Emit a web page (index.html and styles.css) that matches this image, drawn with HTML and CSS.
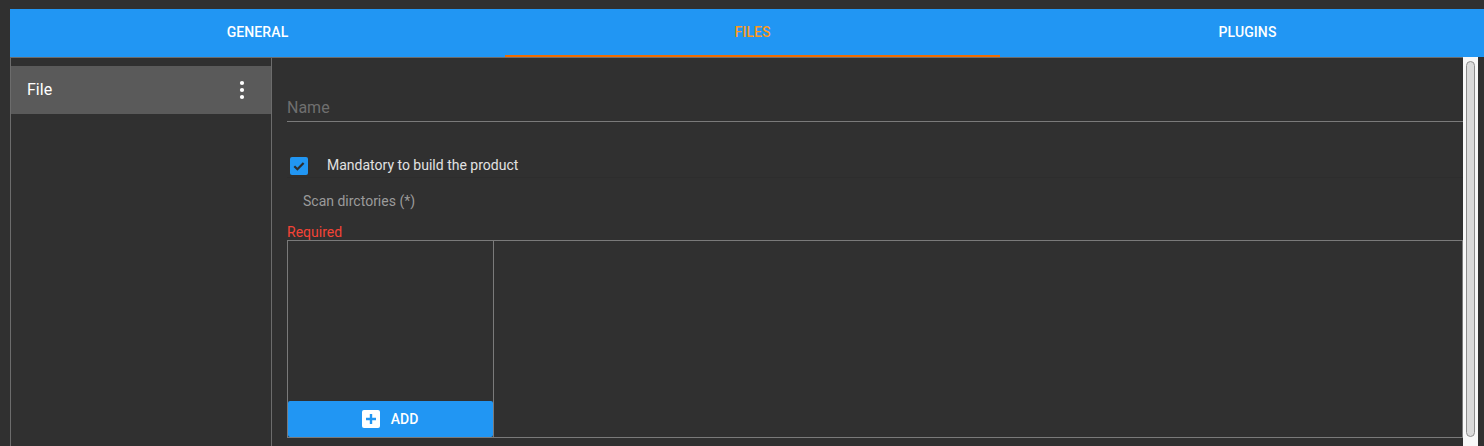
FILE: index.html
```html
<!DOCTYPE html>
<html lang="en">
<head>
<meta charset="utf-8">
<title>Files</title>
<link rel="stylesheet" href="styles.css">
</head>
<body>
<div class="app">
  <nav class="tabs">
    <div class="tab">GENERAL</div>
    <div class="tab active">FILES</div>
    <div class="tab">PLUGINS</div>
  </nav>
  <div class="content">
    <aside class="sidebar">
      <div class="item">
        <span class="item-label">File</span>
        <svg class="kebab" width="6" height="20" viewBox="0 0 6 20"><circle cx="3" cy="3" r="2.1" fill="#fff"/><circle cx="3" cy="10" r="2.1" fill="#fff"/><circle cx="3" cy="17" r="2.1" fill="#fff"/></svg>
      </div>
    </aside>
    <main class="main">
      <div class="field-name">Name</div>
      <div class="check-row">
        <span class="checkbox">
          <svg width="18" height="18" viewBox="0 0 18 18"><path d="M4.3 9.3 L7.4 12.3 L13.6 5.9" fill="none" stroke="#2e2e2e" stroke-width="2.2"/></svg>
        </span>
        <span class="check-label">Mandatory to build the product</span>
      </div>
      <div class="scan-label">Scan dirctories (*)</div>
      <div class="required">Required</div>
      <div class="box">
        <div class="box-left">
          <div class="list"></div>
          <button class="add-btn">
            <svg width="18" height="18" viewBox="0 0 18 18"><rect x="0" y="0" width="18" height="18" rx="2" fill="#fff"/><path d="M9 4 V14 M4 9 H14" stroke="#2196f3" stroke-width="2.4"/></svg>
            <span>ADD</span>
          </button>
        </div>
        <div class="box-right"></div>
      </div>
    </main>
    <div class="scrollbar"><div class="thumb"></div></div>
  </div>
</div>
</body>
</html>
```

FILE: styles.css
```css
html, body {
  margin: 0;
  padding: 0;
  background: #303030;
  overflow: hidden;
  height: 446px;
}
body {
  font-family: Roboto, "Liberation Sans", sans-serif;
  color: #fff;
}
.app {
  padding-top: 9px;
  padding-left: 10px;
}
.tabs {
  width: 1485px;
  height: 48px;
  background: #2196f3;
  display: grid;
  grid-template-columns: repeat(3, 1fr);
}
.tab {
  box-sizing: border-box;
  height: 48px;
  border-bottom: 2px solid transparent;
  display: flex;
  align-items: center;
  justify-content: center;
  font-size: 14px;
  font-weight: 500;
  color: #fff;
  letter-spacing: 0.1px;
}
.tab.active {
  color: #ff9a1a;
  border-bottom-color: #ef6c00;
}
.content {
  display: flex;
  width: 1468px;
  height: 389px;
}
.sidebar {
  box-sizing: border-box;
  width: 262px;
  border-top: 1px solid #6c6c6c;
  border-left: 1px solid #6c6c6c;
  border-right: 1px solid #6c6c6c;
  padding-top: 8px;
}
.item {
  height: 48px;
  background: #5a5a5a;
  display: flex;
  align-items: center;
  justify-content: space-between;
  padding: 0 26px 0 16px;
}
.item-label {
  font-size: 16px;
  line-height: 20px;
  margin-top: -1px;
  color: #fff;
}
.kebab {
  display: block;
}
.main {
  box-sizing: border-box;
  width: 1191px;
  border-top: 1px solid #6c6c6c;
  padding-top: 40px;
  padding-left: 15px;
}
.field-name {
  font-size: 16px;
  line-height: 20px;
  color: #6f6f6f;
  padding-bottom: 3px;
  border-bottom: 1px solid #7a7a7a;
}
.check-row {
  margin-top: 30px;
  height: 25px;
  border-bottom: 1px solid #2d2d2d;
  display: flex;
  align-items: flex-start;
}
.checkbox {
  width: 18px;
  height: 18px;
  margin-top: 5px;
  margin-left: 3px;
  background: #2196f3;
  border-radius: 2px;
  display: block;
}
.checkbox svg {
  display: block;
}
.check-label {
  margin-left: 19px;
  margin-top: 3px;
  font-size: 14px;
  line-height: 20px;
  color: #e2e2e2;
}
.scan-label {
  margin-top: 13px;
  padding-left: 16px;
  font-size: 14px;
  line-height: 20px;
  color: #9b9b9b;
}
.required {
  margin-top: 13px;
  font-size: 14px;
  line-height: 16px;
  color: #f44336;
}
.box {
  box-sizing: border-box;
  height: 198px;
  border: 1px solid #7a7a7a;
  display: flex;
}
.box-left {
  width: 205px;
  border-right: 1px solid #7a7a7a;
  display: flex;
  flex-direction: column;
}
.list {
  flex: 1;
}
.add-btn {
  height: 36px;
  border: none;
  margin: 0;
  padding: 0 1px 0 0;
  border-radius: 2px;
  background: #2196f3;
  color: #fff;
  font-family: Roboto, "Liberation Sans", sans-serif;
  font-size: 14px;
  font-weight: 500;
  display: flex;
  align-items: center;
  justify-content: center;
  gap: 11px;
}
.add-btn svg {
  display: block;
}
.box-right {
  flex: 1;
}
.scrollbar {
  width: 15px;
  background: #f8f8f8;
  padding: 4px 3px 0 3px;
  box-sizing: border-box;
}
.thumb {
  box-sizing: border-box;
  width: 9px;
  height: 376px;
  background: #dadada;
  border: 1px solid #8d8d8d;
  border-radius: 5px;
}
```
